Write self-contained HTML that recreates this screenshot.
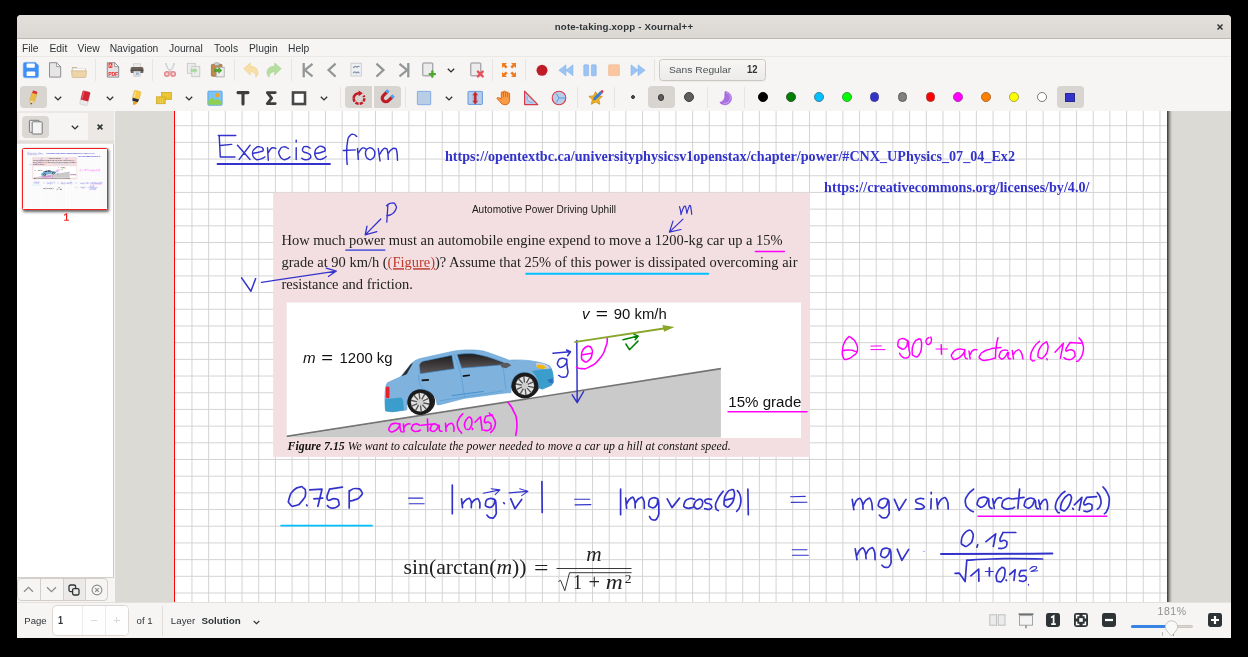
<!DOCTYPE html>
<html>
<head>
<meta charset="utf-8">
<title>note-taking.xopp - Xournal++</title>
<style>
*{box-sizing:border-box;margin:0;padding:0}
html,body{width:1248px;height:657px;overflow:hidden;background:#000;font-family:"Liberation Sans",sans-serif;}
#win{will-change:transform;position:absolute;left:17px;top:15px;width:1214px;height:623px;background:#f6f5f4;border-radius:4px 4px 0 0;overflow:hidden}
.abs{position:absolute}
#title{position:absolute;left:0;top:0;width:1214px;height:24px;background:linear-gradient(#e3e0dc,#dbd7d3);border-bottom:1px solid #bfb8b1;border-radius:4px 4px 0 0}
#title .t{position:absolute;left:0;width:1214px;top:6.4px;text-align:center;font-weight:bold;font-size:9.7px;color:#2e3436;letter-spacing:.16px}
#title .x{position:absolute;left:1196px;top:3px;font-size:13px;font-weight:bold;color:#2e3436}
#menu{position:absolute;left:0;top:24px;width:1214px;height:18px;font-size:10.3px;color:#2e3436}
#menu span{position:absolute;top:3.5px}
.sep{position:absolute;width:1px;background:#e7e4e1}
.ic{position:absolute;width:16px;height:16px;overflow:visible}
.btnbg{position:absolute;background:#d8d4d0;border-radius:4px}
.dd{position:absolute;width:8px;height:5px}
#sidebar{position:absolute;left:0;top:96px;width:97px;height:491px;background:#fff;border-right:1px solid #cdc7c2}
#canvas{position:absolute;left:98px;top:96px;width:1116px;height:491px;background:#dcdad5;overflow:hidden}
#page{position:absolute;left:60.0px;top:-2.2px;width:992px;height:701px;background:#fff;outline:1.4px solid #f00}
#status{position:absolute;left:0;top:587px;width:1214px;height:36px;background:#f6f5f4;font-size:10px;color:#2e3436}
</style>
</head>
<body>
<div id="win">
  <div id="title"><div class="t">note-taking.xopp - Xournal++</div><svg class="abs" style="left:1199.600px;top:8.700px;width:6px;height:6px" viewBox="0 0 6 6"><path d="M.5.500l5 5M5.500.500l-5 5" stroke="#2e3436" stroke-width="1.450"/></svg></div>
  <div class="abs" style="left:0;top:40.700px;width:1214px;height:1px;background:#ebe9e6"></div>
  <div id="menu">
    <span style="left:5px">File</span><span style="left:32.500px">Edit</span><span style="left:60.500px">View</span><span style="left:92.700px">Navigation</span><span style="left:152px">Journal</span><span style="left:197px">Tools</span><span style="left:232px">Plugin</span><span style="left:271px">Help</span>
  </div>
  <!-- toolbar 1 -->
  <div class="sep" style="left:78px;top:44px;height:22px"></div>
  <div class="sep" style="left:135px;top:44px;height:22px"></div>
  <div class="sep" style="left:217px;top:44px;height:22px"></div>
  <div class="sep" style="left:274px;top:44px;height:22px"></div>
  <div class="sep" style="left:475px;top:44px;height:22px"></div>
  <div class="sep" style="left:508px;top:44px;height:22px"></div>
  <div class="sep" style="left:637px;top:44px;height:22px"></div>
  <!-- save -->
  <svg class="ic" style="left:6.3px;top:47px" viewBox="0 0 16 16"><path d="M2.2 0.3h10.2l3.2 3v10.5a2 2 0 0 1-2 2H2.2a2 2 0 0 1-2-2V2.3a2 2 0 0 1 2-2z" fill="#3f8ff5"/><path d="M2.2 0.3h10.2l3.2 3v10.5a2 2 0 0 1-2 2H2.2a2 2 0 0 1-2-2V2.3a2 2 0 0 1 2-2z" fill="none" stroke="#73aef8" stroke-width=".6"/><rect x="3.6" y="1.6" width="8.2" height="4.2" rx=".8" fill="#fff"/><rect x="3.6" y="9.6" width="8.6" height="4.4" rx=".8" fill="#fff"/></svg>
  <!-- new -->
  <svg class="ic" style="left:30.3px;top:47px" viewBox="0 0 16 16"><path d="M2.5 0.7h7.2l4 4v10.4H2.5z" fill="#e6e6e6" stroke="#8e8e93" stroke-width="1" stroke-linejoin="round"/><path d="M9.7 0.7v4h4z" fill="#fafafa" stroke="#8e8e93" stroke-width=".9" stroke-linejoin="round"/></svg>
  <!-- open -->
  <svg class="ic" style="left:54.300px;top:47px" viewBox="0 0 16 16"><path d="M0.800 6a1 1 0 0 1 1-1h3.600l1.200 1H14a1 1 0 0 1 1 1v3H0.800z" fill="#cbb89c"/><rect x="1.800" y="6.300" width="12.600" height="3.400" fill="#fff" stroke="#d8d8d8" stroke-width=".4"/><path d="M0.500 8.800h15l-.6 6a.8.800 0 0 1-.8.700H1.900a.8.800 0 0 1-.8-.7z" fill="#eed5a8" stroke="#cfb386" stroke-width=".7"/></svg>
  <!-- pdf -->
  <svg class="ic" style="left:87.5px;top:47px" viewBox="0 0 16 16"><path d="M2.3 0.7h7.4l4 4v10.4H2.3z" fill="#e2e2e4" stroke="#8e8e93" stroke-width="1" stroke-linejoin="round"/><path d="M9.7 0.7v4h4z" fill="#fafafa" stroke="#8e8e93" stroke-width=".9" stroke-linejoin="round"/><rect x="3.5" y="1.2" width="3.8" height="4.6" fill="#ef2929"/><path d="M4.3 4.8l1-2.6 1.2 2.6" stroke="#fff" stroke-width=".7" fill="none"/><text x="3.3" y="13.6" font-family="Liberation Sans" font-weight="bold" font-size="5.2" fill="#ef2929" letter-spacing="-.2">PDF</text></svg>
  <!-- print -->
  <svg class="ic" style="left:111.500px;top:47px" viewBox="0 0 16 16"><rect x="4.600" y="1.800" width="6.800" height="3.800" fill="#ececec" stroke="#c4c4c4" stroke-width=".6"/><path d="M1.600 6.600a1.500 1.500 0 0 1 1.500-1.500h9.800a1.500 1.500 0 0 1 1.500 1.500v3.600a.8.800 0 0 1-.8.800H2.400a.8.800 0 0 1-.8-.8z" fill="#6d6058"/><rect x="1.600" y="7.800" width="12.800" height="1" fill="#4b423d"/><rect x="4.800" y="9.200" width="6.400" height="5" fill="#dfe3e8" stroke="#b9bec5" stroke-width=".6"/><rect x="7" y="10.400" width="2.800" height="2.400" fill="#9eb1c9"/></svg>
  <!-- cut -->
  <svg class="ic" style="left:144.500px;top:47px" viewBox="0 0 16 16"><path d="M3.900 1.800c.6 2.800 2.400 5.700 5.200 8.300M12.100 1.800c-.6 2.800-2.400 5.700-5.200 8.300" stroke="#c6c6ca" stroke-width="1.500" fill="none" stroke-linecap="round"/><path d="M4.400 2.600c.6 2.200 1.800 4.200 3.600 6M11.600 2.600c-.6 2.200-1.800 4.200-3.600 6" stroke="#ededee" stroke-width=".6" fill="none"/><circle cx="4.900" cy="12" r="2.200" fill="#f2cfd1" stroke="#e3898e" stroke-width="1.500"/><circle cx="11.100" cy="12" r="2.200" fill="#f2cfd1" stroke="#e3898e" stroke-width="1.500"/></svg>
  <!-- copy -->
  <svg class="ic" style="left:168.600px;top:47px" viewBox="0 0 16 16"><rect x="1.300" y="1.300" width="8" height="10" fill="#ececec" stroke="#c3c3c6" stroke-width=".8"/><rect x="5.800" y="4.300" width="8" height="10.400" fill="#ececec" stroke="#c3c3c6" stroke-width=".8"/><path d="M11.600 8.500L8.400 5.700v1.600H4.600v2.400h3.800v1.600z" fill="#a5d89b"/></svg>
  <!-- paste -->
  <svg class="ic" style="left:192.500px;top:47px" viewBox="0 0 16 16"><rect x="1.400" y="2.300" width="10.600" height="12" rx="1" fill="#c08a4a" stroke="#8c6a3f" stroke-width=".7"/><rect x="4.500" y="0.800" width="4.600" height="2.600" rx=".8" fill="#d5d5d5" stroke="#8e8e8e" stroke-width=".6"/><rect x="6.200" y="5.300" width="8" height="9.600" fill="#ededed" stroke="#a9a9ad" stroke-width=".8"/><path d="M11.800 8.400L8.700 5.600v1.700H4.600v2.300h4.100v1.700z" fill="#4fae2f" stroke="#2f8a1a" stroke-width=".5"/></svg>
  <!-- undo -->
  <svg class="ic" style="left:225.800px;top:47px" viewBox="0 0 16 16"><path d="M0.800 6.600L7.300 1v3.200c4.500 0 7.700 2.600 7.700 6.400 0 2-1 3.700-2.300 4.600.5-3.400-1.600-5.400-5.400-5.400v3.300z" fill="#f6dfa6" stroke="#f0cf86" stroke-width=".6" stroke-linejoin="round"/></svg>
  <!-- redo -->
  <svg class="ic" style="left:249.400px;top:47px" viewBox="0 0 16 16"><path d="M15.200 6.600L8.700 1v3.200C4.200 4.200 1 6.800 1 10.600c0 2 1 3.700 2.300 4.600-.5-3.400 1.600-5.400 5.400-5.400v3.300z" fill="#b7dea1" stroke="#a3d488" stroke-width=".6" stroke-linejoin="round"/></svg>
  <!-- first -->
  <svg class="ic" style="left:283px;top:47px" viewBox="0 0 16 16"><path d="M3.700 1v14.300" stroke="#939696" stroke-width="2.300" fill="none"/><path d="M12.500 1.800L4.800 8.100l7.700 6.300" stroke="#939696" stroke-width="2.150" fill="none"/></svg>
  <!-- prev -->
  <svg class="ic" style="left:307px;top:47px" viewBox="0 0 16 16"><path d="M11.600 1.600L4.500 8.100l7.100 6.500" stroke="#939696" stroke-width="2.150" fill="none"/></svg>
  <!-- pageicon -->
  <svg class="ic" style="left:330.700px;top:47px" viewBox="0 0 16 16"><rect x="3" y="1.200" width="10.300" height="12.800" fill="#eef0f2" stroke="#c2c5c8" stroke-width=".8"/><path d="M5 5.600c1-.2 1.500-1.300 2.400-1.300s1 1 2 .6 1.400-.7 2-.3M5 11c.8-.2 1-1.300 1.800-1.200s.8 1.200 1.700 1 1-1 1.600-.7 1 .8 1.400.8" stroke="#7f93ab" stroke-width="1.300" fill="none"/></svg>
  <!-- next -->
  <svg class="ic" style="left:354.900px;top:47px" viewBox="0 0 16 16"><path d="M4.400 1.600l7.100 6.500-7.100 6.500" stroke="#939696" stroke-width="2.150" fill="none"/></svg>
  <!-- last -->
  <svg class="ic" style="left:378.750px;top:47px" viewBox="0 0 16 16"><path d="M12.300 1v14.300" stroke="#939696" stroke-width="2.300" fill="none"/><path d="M3.500 1.800l7.700 6.300-7.700 6.300" stroke="#939696" stroke-width="2.150" fill="none"/></svg>
  <!-- addpage -->
  <svg class="ic" style="left:404px;top:47px" viewBox="0 0 16 16"><rect x="1.800" y="1" width="10" height="12.800" rx=".6" fill="#ececec" stroke="#8e8e93" stroke-width="1"/><path d="M11.300 9.400v5.400M8.600 12.100h5.400" stroke="#4aa82c" stroke-width="2.300" stroke-linecap="round"/></svg>
  <!-- dd -->
  <svg class="dd" style="left:430.400px;top:53px" viewBox="0 0 8 5"><path d="M.8.800L4 3.900 7.200.8" stroke="#2e3436" stroke-width="1.400" fill="none"/></svg>
  <!-- delpage -->
  <svg class="ic" style="left:451.600px;top:47px" viewBox="0 0 16 16"><rect x="1.800" y="1" width="10" height="12.800" rx=".6" fill="#ececec" stroke="#8e8e93" stroke-width="1"/><path d="M8.900 9.600l4.800 4.800M13.700 9.600l-4.800 4.800" stroke="#e8505b" stroke-width="2.400" stroke-linecap="round"/></svg>
  <!-- fullscreen -->
  <svg class="ic" style="left:483.600px;top:47px" viewBox="0 0 16 16"><g fill="#f07c22"><path d="M1 1h5L4.400 2.600l2.200 2.200-1.800 1.800-2.200-2.200L1 6z"/><path d="M15 1v5l-1.600-1.600-2.200 2.200-1.800-1.800 2.200-2.200L10 1z"/><path d="M1 15v-5l1.600 1.600 2.200-2.200 1.800 1.800-2.200 2.200L6 15z"/><path d="M15 15h-5l1.600-1.600-2.200-2.200 1.800-1.800 2.200 2.200L15 10z"/></g></svg>
  <!-- record -->
  <svg class="ic" style="left:516.600px;top:47px" viewBox="0 0 16 16"><circle cx="8" cy="8.300" r="5.500" fill="#c01c28"/></svg>
  <!-- rewind -->
  <svg class="ic" style="left:541px;top:47px" viewBox="0 0 16 16"><path d="M8 2.800v11L.8 8.300zM15 2.800v11L7.800 8.300z" fill="#9cc3f3" stroke="#7fb0ee" stroke-width=".5"/></svg>
  <!-- pause -->
  <svg class="ic" style="left:564.500px;top:47px" viewBox="0 0 16 16"><rect x="1.800" y="2.800" width="4.800" height="11" rx=".6" fill="#9cc3f3" stroke="#7fb0ee" stroke-width=".6"/><rect x="9.400" y="2.800" width="4.800" height="11" rx=".6" fill="#9cc3f3" stroke="#7fb0ee" stroke-width=".6"/></svg>
  <!-- stop -->
  <svg class="ic" style="left:588.600px;top:47px" viewBox="0 0 16 16"><rect x="2.600" y="2.800" width="10.800" height="10.800" rx=".6" fill="#f9c6a1" stroke="#f3b286" stroke-width=".6"/></svg>
  <!-- fwd -->
  <svg class="ic" style="left:612.500px;top:47px" viewBox="0 0 16 16"><path d="M1 2.800v11l7.200-5.500zM8 2.800v11l7.200-5.500z" fill="#9cc3f3" stroke="#7fb0ee" stroke-width=".5"/></svg>
  <!-- font button -->
  <div class="abs" style="left:641.600px;top:44.300px;width:107px;height:21.400px;border:1px solid #cdc7c2;border-radius:3.500px;background:linear-gradient(#f7f6f5,#edebe9);box-shadow:0 1px 0 rgba(0,0,0,.04)"></div>
  <div class="abs" id="fontname" style="left:651.700px;top:50.200px;font-size:9.200px;color:#4b5153;transform-origin:0 50%;transform:scaleX(1.118);white-space:nowrap">Sans Regular</div>
  <div class="abs" id="fontsize" style="left:730.200px;top:48.700px;font-size:10px;font-weight:bold;color:#2e3436;transform-origin:0 50%;transform:scaleX(.94);white-space:nowrap">12</div>
  <!--TOOLBAR1-->
  <!-- toolbar 2 -->
  <div class="btnbg" style="left:2.500px;top:71px;width:27.300px;height:22.300px"></div>
  <div class="btnbg" style="left:328.400px;top:71px;width:27.100px;height:22.300px;border-radius:4px 0 0 4px"></div>
  <div class="btnbg" style="left:356.500px;top:71px;width:27.100px;height:22.300px;border-radius:0 4px 4px 0"></div>
  <div class="btnbg" style="left:630.500px;top:71px;width:27.200px;height:22.300px"></div>
  <div class="btnbg" style="left:1039.500px;top:71px;width:27.200px;height:22.300px"></div>
  <div class="sep" style="left:323px;top:72px;height:21px"></div>
  <div class="sep" style="left:388px;top:72px;height:21px"></div>
  <div class="sep" style="left:560px;top:72px;height:21px"></div>
  <div class="sep" style="left:597px;top:72px;height:21px"></div>
  <div class="sep" style="left:690px;top:72px;height:21px"></div>
  <div class="sep" style="left:727px;top:72px;height:21px"></div>
  <!-- pencil -->
  <svg class="ic" style="left:8px;top:74.600px" viewBox="0 0 16 16"><g transform="rotate(18 8 8)"><path d="M5.600 2.600h4.800v8.200L8 14.900l-2.400-4.100z" fill="#f5c24a" stroke="#c99a2a" stroke-width=".5"/><path d="M5.600 1.600a1 1 0 0 1 1-1h2.800a1 1 0 0 1 1 1v1.800H5.600z" fill="#d9333f"/><path d="M5.600 10.800L8 14.900l2.400-4.100z" fill="#e8d3b0"/><path d="M7.100 13.300L8 14.900l.9-1.600z" fill="#333"/><path d="M7.300 3.400v7.400M8.900 3.400v7.400" stroke="#dca83a" stroke-width=".5"/></g></svg>
  <svg class="dd" style="left:37.400px;top:80.500px" viewBox="0 0 8 5"><path d="M.8.800L4 3.900 7.200.8" stroke="#2e3436" stroke-width="1.400" fill="none"/></svg>
  <!-- eraser -->
  <svg class="ic" style="left:59.500px;top:74.600px" viewBox="0 0 16 16"><g transform="rotate(14 8 8)"><rect x="4.100" y="1.200" width="7.800" height="13.800" rx="1.200" fill="#e9e9ea" stroke="#c4c4c6" stroke-width=".5"/><path d="M4.100 2.400a1.200 1.200 0 0 1 1.200-1.200h5.400a1.200 1.200 0 0 1 1.200 1.200v8.200H4.100z" fill="#d32433"/><path d="M5.400 1.600v8.600" stroke="#e86470" stroke-width=".9"/></g></svg>
  <svg class="dd" style="left:88.700px;top:80.500px" viewBox="0 0 8 5"><path d="M.8.800L4 3.900 7.200.8" stroke="#2e3436" stroke-width="1.400" fill="none"/></svg>
  <!-- highlighter -->
  <svg class="ic" style="left:110.750px;top:74.600px" viewBox="0 0 16 16"><g transform="rotate(14 8 8)"><rect x="4.600" y="0.800" width="6.800" height="8.200" rx="1" fill="#f7c948" stroke="#e0a92a" stroke-width=".5"/><path d="M6 2v6" stroke="#fbe08c" stroke-width="1.200"/><path d="M4.600 8.600h6.800l-.7 3.200H5.300z" fill="#2b2f3a"/><path d="M5.800 11.800h4.400l-.4 2.200-3 1.400z" fill="#f0a020"/></g></svg>
  <!-- measure -->
  <svg class="ic" style="left:138.750px;top:74.600px" viewBox="0 0 16 16"><rect x="5.600" y="2.400" width="10" height="7.200" fill="#e8c02c" stroke="#c79f1a" stroke-width=".6"/><rect x="0.400" y="6.800" width="8.800" height="7" fill="#e8c02c" stroke="#c79f1a" stroke-width=".6"/><path d="M7 4h7.400M7 6h7.400M2 9h5.600M2 11h5.600M2 12.600h5.600" stroke="#f6dc72" stroke-width=".8" stroke-dasharray="1.200 .8"/></svg>
  <svg class="dd" style="left:168px;top:80.500px" viewBox="0 0 8 5"><path d="M.8.800L4 3.900 7.200.8" stroke="#2e3436" stroke-width="1.400" fill="none"/></svg>
  <!-- image -->
  <svg class="ic" style="left:189.900px;top:74.600px" viewBox="0 0 16 16"><rect x="0.900" y="1.200" width="14.200" height="14" rx=".8" fill="#7cc4f5" stroke="#4a97e8" stroke-width=".8"/><circle cx="10.200" cy="5.200" r="2.100" fill="#f5a623"/><path d="M1.300 11l3.400-3.800 3.500 3.300 2.400-1.800 4.100 3.300v2.800H1.300z" fill="#8fd14f"/></svg>
  <!-- T -->
  <svg class="ic" style="left:217.800px;top:74.600px" viewBox="0 0 16 16"><path d="M3 2.600h10M8 2.600v11.400" stroke="#3d3d3d" stroke-width="3.100" stroke-linecap="round" fill="none"/></svg>
  <!-- sigma -->
  <svg class="ic" style="left:245.600px;top:74.600px" viewBox="0 0 16 16"><path d="M12.200 2.600H4.400l4.200 5.500L4.400 13.600h7.800" stroke="#3d3d3d" stroke-width="2.900" stroke-linecap="round" stroke-linejoin="round" fill="none"/></svg>
  <!-- rect -->
  <svg class="ic" style="left:273.750px;top:74.600px" viewBox="0 0 16 16"><rect x="2" y="2.500" width="12" height="11.500" fill="#fff" stroke="#474747" stroke-width="2.600"/></svg>
  <svg class="dd" style="left:303px;top:80.500px" viewBox="0 0 8 5"><path d="M.8.800L4 3.900 7.200.8" stroke="#2e3436" stroke-width="1.400" fill="none"/></svg>
  <!-- rotation snapping -->
  <svg class="ic" style="left:334.250px;top:74.800px" viewBox="0 0 16 16"><path d="M8.600 3.200A5.300 5.300 0 0 0 2.700 8.500" stroke="#c01c28" stroke-width="2.500" fill="none"/><path d="M7.600 0.400l4.200 2.900-4.200 2.900z" fill="#c01c28"/><path d="M2.700 8.500a5.300 5.300 0 0 0 10.600 0 5.300 5.300 0 0 0-.8-2.800" stroke="#c01c28" stroke-width="2.500" fill="none" stroke-dasharray="3.300 1.100"/></svg>
  <!-- magnet -->
  <svg class="ic" style="left:361px;top:75.300px" viewBox="0 0 16 16"><g transform="rotate(45 8 8) translate(8 8) scale(.92) translate(-8 -8)"><path d="M2.300 1.800v6.400a5.700 5.700 0 0 0 11.400 0V1.800h-3.500v6.400a2.200 2.200 0 0 1-4.400 0V1.800z" fill="#c01c28"/><rect x="2.300" y="0.200" width="3.500" height="3.300" fill="#4aa3f5"/><rect x="10.200" y="0.200" width="3.500" height="3.300" fill="#4aa3f5"/></g></svg>
  <!-- blue square -->
  <svg class="ic" style="left:399px;top:74.600px" viewBox="0 0 16 16"><rect x="1.400" y="1.400" width="13.300" height="13.300" rx=".6" fill="#b9cde6" stroke="#79a7e3" stroke-width=".9"/></svg>
  <svg class="dd" style="left:428.400px;top:80.500px" viewBox="0 0 8 5"><path d="M.8.800L4 3.900 7.200.8" stroke="#2e3436" stroke-width="1.400" fill="none"/></svg>
  <!-- vspace -->
  <svg class="ic" style="left:450.400px;top:74.600px" viewBox="0 0 16 16"><rect x="1" y="1.400" width="14.400" height="13" rx=".6" fill="#b9cde6" stroke="#5a92dd" stroke-width=".9"/><path d="M5.400 1.600v12.600M11.100 1.600v12.600" stroke="#a3bfe6" stroke-width=".7"/><path d="M8.200 1.800l2.300 3.300H9.300v5.800h1.200L8.200 14.200 5.900 10.900h1.200V5.100H5.900z" fill="#cf222e" stroke="#b01923" stroke-width=".4"/></svg>
  <!-- hand -->
  <svg class="ic" style="left:479.200px;top:74.600px" viewBox="0 0 16 16"><path d="M5.300 8.600V2.900a1.050 1.050 0 0 1 2.100 0V2.200a1.050 1.050 0 0 1 2.100 0v.7a1.050 1.050 0 0 1 2.100 0v1a1 1 0 0 1 2 0v6.300c0 2.800-1.700 4.500-4.500 4.500-2.600 0-3.800-1-5.100-3L1.200 8.800c-.5-.9.700-1.700 1.500-1z" fill="#fb9b45" stroke="#d9600f" stroke-width=".9" stroke-linejoin="round"/><path d="M7.400 3v4.200M9.500 3v4.200M11.600 4v3.400" stroke="#d9600f" stroke-width=".8" fill="none"/></svg>
  <!-- setsquare -->
  <svg class="ic" style="left:506px;top:74.600px" viewBox="0 0 16 16"><path d="M1.600 1.200L14.800 14.600H1.600z" fill="#b9cde6" stroke="#d93a4a" stroke-width="1.200" stroke-linejoin="round"/><path d="M4 6.300a5.500 5.500 0 0 0 5.500 6.200" fill="#dfe3e6" stroke="#6aa5ea" stroke-width="1"/></svg>
  <!-- compass -->
  <svg class="ic" style="left:534px;top:74.600px" viewBox="0 0 16 16"><circle cx="8" cy="8" r="6.800" fill="#b9cde6" stroke="#d93a4a" stroke-width="1.100"/><path d="M8 8h6.600M8 8L5.400 3.600M8 8l-2.600 4.500" stroke="#4a97e8" stroke-width=".9"/></svg>
  <!-- star pen -->
  <svg class="ic" style="left:571px;top:74.600px" viewBox="0 0 16 16"><path d="M7.600 1.600l2 4.300 4.700.5-3.500 3.200 1 4.700-4.200-2.400-4.200 2.400 1-4.700L.9 6.400l4.700-.5z" fill="#f1b425" stroke="#c98a12" stroke-width=".8" stroke-linejoin="round"/><path d="M12.300 1.300l1.900 1.900-6.300 6.300-2.500.7.600-2.600z" fill="#3b7fd9" stroke="#2a5fa8" stroke-width=".4"/><path d="M12.300 1.300l1.900 1.900 .9-.9a1.300 1.300 0 0 0-1.900-1.900z" fill="#d9333f"/></svg>
  <!-- dots -->
  <div class="abs" style="left:613.700px;top:79.900px;width:4.600px;height:4.600px;border-radius:50%;background:#4a4a4a;border:.8px solid #333"></div>
  <div class="abs" style="left:640.700px;top:78.900px;width:6.800px;height:6.800px;border-radius:50%;background:#5c5c5c;border:.8px solid #3c3c3c"></div>
  <div class="abs" style="left:667px;top:77.200px;width:10px;height:10px;border-radius:50%;background:#5e5e5e;border:.8px solid #3f3f3f"></div>
  <!-- fill -->
  <svg class="ic" style="left:701.400px;top:74.600px" viewBox="0 0 16 16"><path d="M7 1.600a6.600 6.600 0 1 1-5.200 10.800c2.800-.6 4.700-2.700 5-5.600.1-1.800.1-3.400.2-5.200z" fill="#a96fe0" stroke="#9b59dc" stroke-width=".6"/><path d="M8.200 2.600a5.400 5.400 0 0 1-2.600 10.600" fill="none" stroke="#d9bdf3" stroke-width=".7"/></svg>
  <div class="abs" style="left:741.10px;top:77.400px;width:9.800px;height:9.800px;border-radius:50%;background:#000000;border:.8px solid #000"></div>
  <div class="abs" style="left:769.00px;top:77.400px;width:9.800px;height:9.800px;border-radius:50%;background:#008000;border:.8px solid #2a5a2a"></div>
  <div class="abs" style="left:796.90px;top:77.400px;width:9.800px;height:9.800px;border-radius:50%;background:#00c0ff;border:.8px solid #3a7f9c"></div>
  <div class="abs" style="left:824.80px;top:77.400px;width:9.800px;height:9.800px;border-radius:50%;background:#00ff00;border:.8px solid #3a9a3a"></div>
  <div class="abs" style="left:852.70px;top:77.400px;width:9.800px;height:9.800px;border-radius:50%;background:#3333cc;border:.8px solid #3a3a8a"></div>
  <div class="abs" style="left:880.60px;top:77.400px;width:9.800px;height:9.800px;border-radius:50%;background:#808080;border:.8px solid #5a5a5a"></div>
  <div class="abs" style="left:908.50px;top:77.400px;width:9.800px;height:9.800px;border-radius:50%;background:#ff0000;border:.8px solid #a33"></div>
  <div class="abs" style="left:936.40px;top:77.400px;width:9.800px;height:9.800px;border-radius:50%;background:#ff00ff;border:.8px solid #a3a"></div>
  <div class="abs" style="left:964.30px;top:77.400px;width:9.800px;height:9.800px;border-radius:50%;background:#ff8000;border:.8px solid #a63"></div>
  <div class="abs" style="left:992.20px;top:77.400px;width:9.800px;height:9.800px;border-radius:50%;background:#ffff00;border:.8px solid #aa3"></div>
  <div class="abs" style="left:1020.10px;top:77.400px;width:9.800px;height:9.800px;border-radius:50%;background:#ffffff;border:.8px solid #777"></div>
  <div class="abs" style="left:1048.200px;top:77.600px;width:9.800px;height:9.600px;background:#3333cc;border:.8px solid #2a2a8a"></div>
  <!--TOOLBAR2-->
  <div id="sidebar">
    <div class="abs" style="left:0;top:0;width:97px;height:32.500px;background:linear-gradient(#ebe8e5 0,#ebe8e5 29px,#dedad6 31px,#e6e3e0 32.500px)"></div>
    <div class="abs" style="left:2.400px;top:2.200px;width:68.500px;height:27px;background:#f6f5f4"></div>
    <div class="btnbg" style="left:5px;top:4.500px;width:27.200px;height:22px;background:#dbd7d3"></div>
    <svg class="ic" style="left:10.600px;top:7.500px" viewBox="0 0 16 16"><rect x="1.400" y="1.300" width="9.800" height="12" rx=".8" fill="#e9e9e9" stroke="#77797b" stroke-width="1"/><rect x="4.200" y="2.800" width="10" height="12.200" rx=".8" fill="#f4f4f4" stroke="#77797b" stroke-width="1"/></svg>
    <svg class="dd" style="left:54.200px;top:13.800px" viewBox="0 0 8 5"><path d="M.8.800L4 3.900 7.200.8" stroke="#2e3436" stroke-width="1.400" fill="none"/></svg>
    <svg class="abs" style="left:79.800px;top:12.800px;width:6px;height:6px" viewBox="0 0 6 6"><path d="M.6.600l4.800 4.800M5.400.600L.600 5.400" stroke="#2e3436" stroke-width="1.650"/></svg>
    <!-- thumbnail -->
    <div class="abs" style="left:5.300px;top:37px;width:86.200px;height:62px;background:#fff;border:1.700px solid #f02020;border-radius:1.500px;box-shadow:1px 1.500px 3px rgba(0,0,0,.6)"></div>
    <svg class="abs" style="left:7px;top:38.600px;width:83px;height:59px" viewBox="0 0 992 701" preserveAspectRatio="none"><use href="#pg"/></svg>
    <svg class="abs" style="left:45.600px;top:101.900px;width:7px;height:8px" viewBox="0 0 7 8"><path d="M1 2.200L3.600 .800V7.200M1.200 7.200H6" stroke="#f01c1c" stroke-width="1.150" fill="none"/></svg>
    <!-- bottom buttons -->
    <div class="abs" style="left:0;top:465.500px;width:97px;height:25px;background:#f6f5f4;border-top:1px solid #d5d0cc"></div>
    <div class="abs" style="left:0.300px;top:467.200px;width:91.200px;height:22.500px;border:1px solid #d3cec9;border-radius:4px;background:#f6f5f4;overflow:hidden">
      <div class="abs" style="left:44.300px;top:0;width:23px;height:22px;background:#eceae8;border-left:1px solid #d3cec9;border-right:1px solid #d3cec9"></div>
      <div class="abs" style="left:21.600px;top:0;width:1px;height:22px;background:#d3cec9"></div>
    </div>
    <svg class="abs" style="left:6.300px;top:475px;width:11px;height:7px" viewBox="0 0 11 7"><path d="M1 5.800L5.500 1.400 10 5.800" stroke="#8b8e8f" stroke-width="1.300" fill="none"/></svg>
    <svg class="abs" style="left:28.800px;top:475.400px;width:11px;height:7px" viewBox="0 0 11 7"><path d="M1 1.200l4.500 4.400L10 1.200" stroke="#8b8e8f" stroke-width="1.300" fill="none"/></svg>
    <svg class="abs" style="left:51px;top:472.800px;width:12px;height:12px" viewBox="0 0 12 12"><rect x="1" y="1" width="6.600" height="6.600" rx="1.600" fill="none" stroke="#2e3436" stroke-width="1.300"/><rect x="4.600" y="4.600" width="6.400" height="6.400" rx="1.400" fill="#eceae8" stroke="#2e3436" stroke-width="1.300"/></svg>
    <svg class="abs" style="left:73.800px;top:473px;width:12px;height:12px" viewBox="0 0 12 12"><circle cx="6" cy="6" r="4.900" fill="none" stroke="#8b8e8f" stroke-width="1.100"/><path d="M4.200 4.200l3.600 3.600M7.800 4.200L4.200 7.800" stroke="#8b8e8f" stroke-width="1.200"/></svg>
  <!--SIDEBAR-->
  </div>
  <div id="canvas">
    <div class="abs" style="left:1053.300px;top:0;width:4.600px;height:491px;background:linear-gradient(to right,rgba(70,74,72,.9),rgba(110,110,105,.5) 35%,rgba(160,160,155,.15) 75%,rgba(220,218,213,0))"></div>
    <div id="page">
<!--PAGE_BEGIN-->
<svg id="pagesvg" class="abs" style="left:0;top:0;width:992.0px;height:701.0px" viewBox="0 0 992.0 701.0">
<g id="pg" transform="translate(-175.0,-108.8)">
<path d="M191.94 108.8V809.8M208.63 108.8V809.8M225.32 108.8V809.8M242.01 108.8V809.8M258.70 108.8V809.8M275.39 108.8V809.8M292.08 108.8V809.8M308.77 108.8V809.8M325.46 108.8V809.8M342.15 108.8V809.8M358.84 108.8V809.8M375.53 108.8V809.8M392.22 108.8V809.8M408.91 108.8V809.8M425.60 108.8V809.8M442.29 108.8V809.8M458.98 108.8V809.8M475.67 108.8V809.8M492.36 108.8V809.8M509.05 108.8V809.8M525.74 108.8V809.8M542.43 108.8V809.8M559.12 108.8V809.8M575.81 108.8V809.8M592.50 108.8V809.8M609.19 108.8V809.8M625.88 108.8V809.8M642.57 108.8V809.8M659.26 108.8V809.8M675.95 108.8V809.8M692.64 108.8V809.8M709.33 108.8V809.8M726.02 108.8V809.8M742.71 108.8V809.8M759.40 108.8V809.8M776.09 108.8V809.8M792.78 108.8V809.8M809.47 108.8V809.8M826.16 108.8V809.8M842.85 108.8V809.8M859.54 108.8V809.8M876.23 108.8V809.8M892.92 108.8V809.8M909.61 108.8V809.8M926.30 108.8V809.8M942.99 108.8V809.8M959.68 108.8V809.8M976.37 108.8V809.8M993.06 108.8V809.8M1009.75 108.8V809.8M1026.44 108.8V809.8M1043.13 108.8V809.8M1059.82 108.8V809.8M1076.51 108.8V809.8M1093.20 108.8V809.8M1109.89 108.8V809.8M1126.58 108.8V809.8M1143.27 108.8V809.8M1159.96 108.8V809.8M175.0 125.49H1167.0M175.0 142.18H1167.0M175.0 158.87H1167.0M175.0 175.56H1167.0M175.0 192.25H1167.0M175.0 208.94H1167.0M175.0 225.63H1167.0M175.0 242.32H1167.0M175.0 259.01H1167.0M175.0 275.70H1167.0M175.0 292.39H1167.0M175.0 309.08H1167.0M175.0 325.77H1167.0M175.0 342.46H1167.0M175.0 359.15H1167.0M175.0 375.84H1167.0M175.0 392.53H1167.0M175.0 409.22H1167.0M175.0 425.91H1167.0M175.0 442.60H1167.0M175.0 459.29H1167.0M175.0 475.98H1167.0M175.0 492.67H1167.0M175.0 509.36H1167.0M175.0 526.05H1167.0M175.0 542.74H1167.0M175.0 559.43H1167.0M175.0 576.12H1167.0M175.0 592.81H1167.0M175.0 609.50H1167.0M175.0 626.19H1167.0M175.0 642.88H1167.0M175.0 659.57H1167.0M175.0 676.26H1167.0M175.0 692.95H1167.0M175.0 709.64H1167.0M175.0 726.33H1167.0M175.0 743.02H1167.0M175.0 759.71H1167.0M175.0 776.40H1167.0M175.0 793.09H1167.0" stroke="#cfcfcf" stroke-width="0.9" fill="none"/>
<!-- typed URL text -->
<text x="444.900" y="160.400" font-family="Liberation Serif" font-weight="bold" font-size="14.120" fill="#3333cc" textLength="570.100" lengthAdjust="spacingAndGlyphs">https://opentextbc.ca/universityphysicsv1openstax/chapter/power/#CNX_UPhysics_07_04_Ex2</text>
<text x="824.100" y="191.400" font-family="Liberation Serif" font-weight="bold" font-size="14.120" fill="#3333cc" textLength="265.300" lengthAdjust="spacingAndGlyphs">https://creativecommons.org/licenses/by/4.0/</text>
<!-- pink box -->
<rect x="273.100" y="192.500" width="536.800" height="264.200" fill="#f3dfe1"/>
<text x="471.900" y="212.600" font-family="Liberation Sans" font-size="10.080" fill="#1a1a1a" textLength="144" lengthAdjust="spacingAndGlyphs">Automotive Power Driving Uphill</text>
<g font-family="Liberation Serif" font-size="14.470" fill="#222">
<text x="281.500" y="244.950">How much power must an automobile engine expend to move a 1200-kg car up a 15%</text>
<text x="281.500" y="267.000">grade at 90 km/h (<tspan fill="#c0392b" text-decoration="underline">(Figure)</tspan>)? Assume that 25% of this power is dissipated overcoming air</text>
<text x="281.500" y="289.000">resistance and friction.</text>
</g>
<!-- figure -->
<rect x="286.700" y="302.300" width="514.300" height="135.500" fill="#fff"/>
<path d="M286.700 437.300L720.900 368.400V437.300z" fill="#cacaca"/>
<path d="M286.700 436.200L720.900 368.400" stroke="#747474" stroke-width="1.600" fill="none"/>
<g font-family="Liberation Sans" font-size="15.100" fill="#111">
<text x="303" y="362.700" font-style="italic">m</text>
<text x="321.300" y="362.700" textLength="11.800" lengthAdjust="spacingAndGlyphs">=</text>
<text x="339.600" y="362.700" textLength="52.900" lengthAdjust="spacingAndGlyphs">1200 kg</text>
<text x="582" y="318.600" font-style="italic">v</text>
<text x="595.800" y="318.600" textLength="12.300" lengthAdjust="spacingAndGlyphs">=</text>
<text x="613.800" y="318.600" textLength="52.900" lengthAdjust="spacingAndGlyphs">90 km/h</text>
<text x="728.300" y="406.700" font-size="15.100">15% grade</text>
</g>
<text x="287.600" y="449.600" font-family="Liberation Serif" font-size="11.830" font-style="italic" fill="#111"><tspan font-weight="bold">Figure 7.15</tspan> We want to calculate the power needed to move a car up a hill at constant speed.</text>
<g transform="translate(378,340) scale(0.15064)">
<!-- wheel wells -->
<ellipse cx="286" cy="406" rx="93" ry="86" fill="#222"/>
<ellipse cx="976" cy="296" rx="95" ry="86" fill="#222"/>
<!-- body -->
<path d="M50 470C44 420 44 350 52 305L62 283 150 243 215 163C235 140 255 130 275 123L500 73C560 62 660 62 700 72 760 90 815 112 870 133 930 128 1000 133 1045 142 1090 150 1125 160 1140 172 1158 195 1165 220 1165 280L1150 300 1090 325 1068 318C1072 270 1040 218 975 212 910 212 875 265 883 348L830 352 575 386 410 428 392 428C388 370 350 328 285 326 220 328 185 375 192 462L170 466 95 476z" fill="#7fb2dd" stroke="#5a9fd6" stroke-width="4" stroke-linejoin="round"/>
<!-- bumpers -->
<path d="M48 392L150 380C162 385 166 395 167 405L172 465 95 476 50 470C46 445 45 420 48 392z" fill="#3b9dcb"/>
<path d="M1020 205C1060 195 1110 195 1150 190 1160 210 1165 240 1165 280L1150 300 1090 325 1068 318C1070 280 1055 235 1020 205z" fill="#3b9dcb"/>
<path d="M1125 262L1160 255V286L1138 283z" fill="#2b6fc4"/>
<!-- windows -->
<linearGradient id="wg" x1="0" y1="0" x2="0" y2="1"><stop offset="0" stop-color="#1e1e1e"/><stop offset="1" stop-color="#5b5456"/></linearGradient>
<path d="M156 240L216 162 233 150 190 226z" fill="#2b2b2e"/>
<path d="M280 222L275 165C278 150 290 142 302 139L490 100 506 190z" fill="url(#wg)" stroke="#3d8fd0" stroke-width="4"/>
<path d="M525 95C570 88 610 88 645 91 700 100 790 128 852 156L800 166 555 186z" fill="url(#wg)" stroke="#3d8fd0" stroke-width="4"/>
<path d="M810 156L860 150 885 166 850 186 820 180z" fill="#5a5a5c"/>
<!-- door lines -->
<path d="M505 90L550 222 576 382M832 186L850 332M410 402L832 336M270 230C265 290 290 320 330 335" stroke="#4f9ad8" stroke-width="4" fill="none"/>
<path d="M490 368L700 340" stroke="#3d8fd0" stroke-width="6" fill="none"/>
<path d="M290 267L338 263M563 238L610 233" stroke="#111" stroke-width="11" fill="none"/>
<!-- lights -->
<rect x="52" y="308" width="24" height="78" rx="10" fill="#e8212b"/>
<path d="M1048 152C1080 145 1125 160 1142 186 1110 195 1070 190 1050 175z" fill="#c9ccd0"/>
<ellipse cx="1082" cy="177" rx="30" ry="12" fill="#f2b705" transform="rotate(12 1082 177)"/>
<circle cx="280" cy="412" r="84" fill="#1b1b1b"/>
<circle cx="280" cy="412" r="64" fill="#3a3a3a"/>
<circle cx="280" cy="412" r="61" fill="#e3e3e3"/>
<path d="M303.5 416.8L336.8 423.5" stroke="#555" stroke-width="9" stroke-linecap="round"/>
<path d="M296.2 429.7L319.2 454.7" stroke="#555" stroke-width="9" stroke-linecap="round"/>
<path d="M282.7 435.8L286.6 469.6" stroke="#555" stroke-width="9" stroke-linecap="round"/>
<path d="M268.2 432.9L251.5 462.5" stroke="#555" stroke-width="9" stroke-linecap="round"/>
<path d="M258.2 422.0L227.2 436.1" stroke="#555" stroke-width="9" stroke-linecap="round"/>
<path d="M256.5 407.2L223.2 400.5" stroke="#555" stroke-width="9" stroke-linecap="round"/>
<path d="M263.8 394.3L240.8 369.3" stroke="#555" stroke-width="9" stroke-linecap="round"/>
<path d="M277.3 388.2L273.4 354.4" stroke="#555" stroke-width="9" stroke-linecap="round"/>
<path d="M291.8 391.1L308.5 361.5" stroke="#555" stroke-width="9" stroke-linecap="round"/>
<path d="M301.8 402.0L332.8 387.9" stroke="#555" stroke-width="9" stroke-linecap="round"/>
<circle cx="280" cy="412" r="20" fill="#cfcfcf" stroke="#bbb" stroke-width="2"/>
<circle cx="975" cy="302" r="84" fill="#1b1b1b"/>
<circle cx="975" cy="302" r="64" fill="#3a3a3a"/>
<circle cx="975" cy="302" r="61" fill="#e3e3e3"/>
<path d="M998.5 306.8L1031.8 313.5" stroke="#555" stroke-width="9" stroke-linecap="round"/>
<path d="M991.2 319.7L1014.2 344.7" stroke="#555" stroke-width="9" stroke-linecap="round"/>
<path d="M977.7 325.8L981.6 359.6" stroke="#555" stroke-width="9" stroke-linecap="round"/>
<path d="M963.2 322.9L946.5 352.5" stroke="#555" stroke-width="9" stroke-linecap="round"/>
<path d="M953.2 312.0L922.2 326.1" stroke="#555" stroke-width="9" stroke-linecap="round"/>
<path d="M951.5 297.2L918.2 290.5" stroke="#555" stroke-width="9" stroke-linecap="round"/>
<path d="M958.8 284.3L935.8 259.3" stroke="#555" stroke-width="9" stroke-linecap="round"/>
<path d="M972.3 278.2L968.4 244.4" stroke="#555" stroke-width="9" stroke-linecap="round"/>
<path d="M986.8 281.1L1003.5 251.5" stroke="#555" stroke-width="9" stroke-linecap="round"/>
<path d="M996.8 292.0L1027.8 277.9" stroke="#555" stroke-width="9" stroke-linecap="round"/>
<circle cx="975" cy="302" r="20" fill="#cfcfcf" stroke="#bbb" stroke-width="2"/>
</g>

<!-- latex formula -->
<g font-family="Liberation Serif" fill="#222" font-size="20px">
<text x="403.600" y="573.900" textLength="123" lengthAdjust="spacingAndGlyphs">sin(arctan(<tspan font-style="italic">m</tspan>))</text>
<text x="534" y="574.500" textLength="14.500" lengthAdjust="spacingAndGlyphs">=</text>
<text x="586.300" y="560.400" font-style="italic" textLength="15.400" lengthAdjust="spacingAndGlyphs">m</text>
<text x="573" y="588.750" textLength="9" lengthAdjust="spacingAndGlyphs">1</text>
<text x="588.500" y="588.750" textLength="11.500" lengthAdjust="spacingAndGlyphs">+</text>
<text x="605.800" y="588.750" font-style="italic" textLength="17" lengthAdjust="spacingAndGlyphs">m</text>
<text x="624.800" y="582.500" font-size="13.500">2</text>
</g>
<path d="M556.500 568.300H631.500" stroke="#222" stroke-width=".9"/>
<path d="M558.300 581.300l2.300-1.200 4.200 10.400 4.700-18H631.500" stroke="#222" stroke-width=".9" fill="none"/>

<path d="M218.3 135.3L235.8 135.3M219.2 135.3L220.3 156.7M220.3 145.3L231.7 144.2M220.3 156.7L235.0 156.7M237.5 145.0L250.0 159.2M250.0 145.0L239.2 159.2M252.5 153.0C255.0 152.6 256.4 152.8 260.0 151.7C263.6 150.6 263.3 151.3 263.3 149.7C263.3 148.0 262.8 147.1 260.0 146.7C257.2 146.2 257.5 146.1 255.0 148.3C252.5 150.6 252.5 150.0 252.5 153.3C252.5 156.7 252.8 156.4 255.0 158.3C257.2 160.3 255.8 159.7 259.2 159.2C262.5 158.6 263.1 157.5 265.0 156.7M267.5 147.5L268.3 160.0M268.3 152.5C269.0 151.4 268.8 150.8 270.3 149.2C271.9 147.5 271.2 147.8 273.0 147.5C274.8 147.2 274.9 148.1 275.8 148.3M288.3 148.3C286.7 147.8 286.2 146.1 283.3 146.7C280.4 147.2 281.1 147.5 279.7 150.0C278.3 152.5 278.2 151.2 279.2 154.2C280.1 157.1 280.0 157.3 282.5 158.8C285.0 160.4 284.2 159.6 286.7 158.8C289.2 158.1 288.9 157.4 290.0 156.7M296.2 147.5L296.2 159.2M296.2 140.0L296.2 141.7M310.0 148.0C308.8 147.4 308.7 146.3 306.3 146.3C304.0 146.3 304.0 146.3 303.0 148.0C302.0 149.7 301.8 149.7 303.3 151.3C304.8 153.0 305.1 151.7 307.5 153.0C309.9 154.3 309.9 153.4 310.5 155.3C311.1 157.2 311.0 157.3 309.2 158.7C307.3 160.1 307.5 159.7 305.0 159.5C302.5 159.3 302.8 158.5 301.7 158.0M315.0 153.3C317.2 152.9 318.2 153.2 321.7 152.0C325.1 150.8 325.2 151.6 325.3 149.7C325.4 147.8 324.6 147.1 322.0 146.3C319.4 145.6 319.8 145.7 317.5 147.5C315.2 149.3 315.6 148.6 315.0 151.7C314.4 154.7 314.4 154.2 315.8 156.7C317.2 159.2 316.7 158.6 319.2 159.2C321.7 159.7 321.0 159.3 323.3 158.3C325.7 157.4 325.2 157.0 326.2 156.3M356.7 136.3C355.6 135.6 355.7 134.3 353.3 134.2C351.0 134.0 351.6 133.3 349.7 135.8C347.7 138.3 348.5 135.8 347.5 141.7C346.5 147.5 346.8 145.8 346.7 153.3C346.6 160.8 347.0 160.6 347.2 164.2M343.3 150.3L355.3 149.7M357.5 148.3L358.3 159.2M358.3 153.0C359.2 151.7 359.2 150.9 360.8 149.2C362.5 147.4 361.7 147.8 363.3 147.7C365.0 147.5 365.0 148.3 365.8 148.7M370.0 147.5C368.8 148.3 367.7 147.5 366.3 150.0C364.9 152.5 365.2 152.1 365.8 155.0C366.5 157.9 366.1 157.7 368.3 158.8C370.6 159.9 370.4 159.9 372.5 158.3C374.6 156.8 374.3 157.1 374.7 154.2C375.1 151.3 375.2 151.9 373.7 149.7C372.1 147.4 371.2 148.2 370.0 147.5M378.3 148.3L380.0 160.8M380.0 153.7C381.0 152.2 381.1 150.9 383.0 149.2C384.9 147.4 384.3 147.8 385.8 148.3C387.3 148.9 386.7 147.2 387.5 150.8C388.3 154.4 388.1 156.4 388.3 159.2M388.3 153.0C389.4 151.7 389.6 150.7 391.7 149.2C393.8 147.6 393.0 147.8 394.7 148.3C396.3 148.9 395.7 146.9 396.7 150.8C397.6 154.7 397.2 156.9 397.5 160.0" stroke="#3333cc" stroke-width="1.45" fill="none" stroke-linecap="round" stroke-linejoin="round"/>
<path d="M217.5 163.8L330.0 163.8" stroke="#3333cc" stroke-width="1.8" fill="none" stroke-linecap="round" stroke-linejoin="round"/>
<path d="M387.9 204.3L386.8 221.9M386.4 205.6C388.0 204.7 388.1 203.2 391.2 202.9C394.3 202.7 394.3 202.4 395.6 204.9C396.9 207.4 396.8 207.3 395.2 210.4C393.5 213.6 393.5 212.8 390.8 214.4C388.0 216.0 388.1 215.0 386.8 215.3M380.8 218.8L365.2 234.7M367.0 225.9L365.2 234.7L376.9 231.4" stroke="#3333cc" stroke-width="1.3" fill="none" stroke-linecap="round" stroke-linejoin="round"/>
<path d="M346.0 249.9L384.6 249.9" stroke="#6565dc" stroke-width="1.9" fill="none" stroke-linecap="round" stroke-linejoin="round"/>
<path d="M241.6 277.7L250.9 291.1L255.7 278.4" stroke="#3333cc" stroke-width="1.5" fill="none" stroke-linecap="round" stroke-linejoin="round"/>
<path d="M261.4 282.1L336.4 270.9M326.2 268.0L336.4 270.9L328.4 276.2" stroke="#3333cc" stroke-width="1.2" fill="none" stroke-linecap="round" stroke-linejoin="round"/>
<path d="M679.5 206.4C679.8 207.8 680.0 207.8 680.5 210.5C681.0 213.2 680.9 213.1 681.0 214.4M681.0 214.4C681.7 212.5 681.7 211.4 683.0 208.6C684.3 205.8 683.8 205.8 684.9 206.0C686.0 206.2 685.6 206.9 686.2 209.2C686.9 211.6 686.6 211.8 686.9 213.1M686.9 213.1C687.4 211.4 687.5 210.5 688.5 207.9C689.6 205.3 689.2 204.9 690.1 205.3C691.0 205.8 690.6 206.3 691.1 209.2C691.7 212.2 691.5 212.5 691.7 214.1M683.0 218.9L669.4 231.9M673.0 220.9L669.4 231.9L681.0 229.3" stroke="#3333cc" stroke-width="1.2" fill="none" stroke-linecap="round" stroke-linejoin="round"/>
<path d="M755.4 251.3L784.3 251.3" stroke="#ff00ff" stroke-width="1.5" fill="none" stroke-linecap="round" stroke-linejoin="round"/>
<path d="M526.2 273.6L708.2 273.6" stroke="#00c0ff" stroke-width="2.0" fill="none" stroke-linecap="round" stroke-linejoin="round"/>
<path d="M576.8 340.2L577.2 402.4M572.2 394.6L577.2 402.4L583.6 391.3M552.9 353.1L570.0 351.6M566.5 349.8L570.5 351.6L567.6 355.5M566.5 359.5C565.0 359.0 564.9 357.6 562.2 358.1C559.4 358.6 559.4 358.3 558.2 360.9C557.0 363.6 557.0 364.1 558.6 365.9C560.2 367.8 560.3 367.6 562.9 366.4C565.5 365.2 565.3 364.8 566.5 362.4C567.7 360.0 566.2 357.8 566.5 359.2C566.7 360.7 566.8 361.8 567.2 366.7C567.6 371.5 568.8 370.4 567.6 373.8C566.4 377.3 566.6 376.5 563.6 377.0C560.6 377.4 560.3 375.8 558.6 375.2" stroke="#3333cc" stroke-width="1.5" fill="none" stroke-linecap="round" stroke-linejoin="round"/>
<path d="M607.3 337.8C606.8 340.7 608.5 339.6 605.8 346.6C603.2 353.6 604.9 352.1 599.4 358.8C593.9 365.5 595.3 363.5 589.4 366.7C583.4 369.9 585.8 368.3 581.5 368.4C577.2 368.5 578.2 367.4 576.5 366.9M587.9 345.9C586.5 346.9 585.8 345.7 583.6 348.8C581.5 351.9 581.5 351.3 581.5 355.2C581.5 359.2 581.3 359.0 583.6 360.7C586.0 362.3 585.9 362.3 588.7 360.2C591.4 358.2 591.0 358.6 591.9 354.5C592.9 350.4 592.9 350.9 591.5 348.1C590.2 345.2 589.1 346.6 587.9 345.9M582.5 354.5L591.5 353.1" stroke="#ff00ff" stroke-width="1.6" fill="none" stroke-linecap="round" stroke-linejoin="round"/>
<path d="M623.0 339.5L638.0 335.9M634.0 334.2L638.3 335.9L635.2 339.5M625.9 343.8L629.4 349.5L638.0 340.9" stroke="#008000" stroke-width="1.5" fill="none" stroke-linecap="round" stroke-linejoin="round"/>
<path d="M399.8 424.4C398.0 424.0 397.8 422.4 394.4 423.2C391.0 424.0 391.0 424.2 389.6 426.9C388.2 429.5 388.4 429.9 390.2 431.1C392.0 432.3 392.0 432.1 395.0 430.5C398.0 428.9 397.6 428.5 399.2 426.2C400.8 424.0 399.4 422.6 399.8 423.8C400.2 425.0 399.6 427.3 400.4 429.9C401.2 432.5 401.6 431.1 402.2 431.7M403.4 423.8L404.0 431.7M404.0 427.2C405.0 426.2 405.0 425.2 407.0 424.1C409.0 423.0 409.0 423.9 410.0 423.8M419.7 425.0C418.3 424.6 418.1 423.2 415.5 423.8C412.9 424.4 412.7 424.6 411.9 426.9C411.0 429.1 411.3 429.1 413.1 430.5C414.9 431.9 414.9 431.3 417.3 431.1C419.7 430.9 419.3 430.3 420.3 429.9M427.5 418.8L427.8 431.1M421.1 425.0L432.9 423.8M437.7 425.0C436.3 424.6 435.9 423.0 433.5 423.8C431.1 424.6 431.1 425.1 430.5 427.5C429.9 429.8 429.9 430.0 431.7 430.8C433.5 431.6 433.5 431.8 435.9 429.9C438.3 427.9 437.7 425.0 438.9 425.0C440.1 425.0 438.5 427.9 439.5 429.9C440.5 431.9 441.1 430.7 441.9 431.1M445.5 423.2L446.1 431.1M446.1 427.2C447.3 426.0 447.3 424.3 449.7 423.6C452.1 422.9 451.9 422.6 453.3 425.0C454.7 427.5 453.7 429.1 453.9 431.1M462.9 413.6C461.5 415.4 460.5 414.8 458.7 419.0C456.9 423.2 456.5 421.6 457.5 426.2C458.5 430.9 460.3 430.7 461.7 432.9M468.3 417.2C467.3 418.6 466.5 418.4 465.3 421.4C464.1 424.4 464.1 423.6 464.7 426.2C465.3 428.9 465.1 429.1 467.1 429.3C469.1 429.5 469.1 429.5 470.7 426.9C472.3 424.2 471.9 424.5 471.9 421.4C471.9 418.4 471.9 419.0 470.7 417.6C469.5 416.2 469.1 417.4 468.3 417.2M472.3 428.1L472.5 429.3M475.0 422.0L480.4 416.6L482.2 429.9M492.4 414.8L485.8 416.0M485.8 416.0C485.4 418.0 483.6 420.0 484.6 422.0C485.6 424.0 486.6 420.8 488.8 422.0C491.0 423.2 491.2 423.0 491.2 425.6C491.2 428.3 491.2 428.5 488.8 429.9C486.4 431.3 485.6 429.9 484.0 429.9M489.4 413.0C491.0 415.0 492.4 414.6 494.2 419.0C496.0 423.4 496.0 421.8 494.8 426.2C493.6 430.7 492.0 430.3 490.6 432.3M508.0 402.2C509.8 405.0 510.5 404.2 513.4 410.6C516.3 417.0 516.0 413.2 516.8 421.4C517.6 429.7 516.1 430.7 515.8 435.3" stroke="#ff00ff" stroke-width="1.6" fill="none" stroke-linecap="round" stroke-linejoin="round"/>
<path d="M849.1 336.3C847.7 338.1 847.1 337.0 844.9 341.5C842.7 346.1 843.0 344.7 842.5 349.9C842.0 355.1 841.8 354.1 843.3 357.2C844.8 360.2 843.7 359.6 847.0 359.0C850.3 358.5 849.8 358.5 853.2 355.6C856.7 352.7 856.5 354.7 857.4 350.4C858.3 346.1 857.7 346.8 855.8 342.6C853.9 338.4 853.9 340.0 851.7 337.9C849.4 335.8 849.9 336.9 849.1 336.3M843.3 350.4C845.4 350.2 845.4 349.5 849.6 349.9C853.8 350.2 853.8 350.9 855.8 351.4M906.9 340.0C905.1 339.5 904.6 337.5 901.7 338.4C898.7 339.3 898.5 339.5 898.0 342.6C897.5 345.7 897.5 346.2 900.1 347.8C902.7 349.4 903.2 349.7 905.8 347.3C908.4 344.8 906.9 340.0 907.9 340.5C909.0 341.0 908.4 344.0 909.0 348.8C909.5 353.7 910.5 352.1 909.5 355.1C908.4 358.0 908.4 357.3 905.8 357.7C903.2 358.0 903.8 357.7 901.7 356.1C899.6 354.6 900.3 354.0 899.6 353.0M918.3 338.9C916.9 340.2 916.2 338.6 914.2 342.6C912.1 346.6 911.9 346.4 912.1 350.9C912.3 355.4 912.3 355.1 914.7 356.1C917.1 357.2 917.1 357.2 919.4 354.0C921.6 350.9 920.9 351.4 921.5 346.8C922.0 342.1 922.0 342.6 920.9 340.0C919.9 337.4 919.2 339.3 918.3 338.9M928.8 337.4C927.9 338.2 926.8 337.9 926.1 340.0C925.5 342.1 925.5 342.4 926.7 343.6C927.9 344.8 928.2 344.8 929.8 343.6C931.4 342.4 931.0 342.2 931.4 340.0C931.7 337.7 931.0 337.9 930.8 336.9M941.2 344.5L941.5 354.0" stroke="#ff00ff" stroke-width="1.5" fill="none" stroke-linecap="round" stroke-linejoin="round"/>
<path d="M870.9 345.9L881.4 345.7M870.9 349.4L885.0 349.4M936.0 348.8L947.5 348.8" stroke="#ff00ff" stroke-width="1.0" fill="none" stroke-linecap="round" stroke-linejoin="round"/>
<path d="M964.2 349.6C962.2 349.4 962.0 348.0 958.2 349.0C954.4 350.0 954.8 349.8 952.8 352.6C950.8 355.4 950.8 355.4 952.2 357.4C953.6 359.5 953.4 359.9 957.0 358.6C960.6 357.4 960.4 356.8 963.0 353.8C965.6 350.8 964.2 348.8 964.8 349.6C965.4 350.4 964.0 353.2 964.8 356.2C965.6 359.2 966.4 357.8 967.2 358.6M969.0 350.8L970.2 358.6M970.2 354.2C971.2 352.8 971.0 351.4 973.2 349.9C975.4 348.4 975.6 349.7 976.9 349.6M990.1 349.0C988.3 349.6 988.1 348.8 984.7 350.8C981.3 352.8 981.1 352.2 979.9 355.0C978.7 357.8 978.7 357.6 981.1 359.2C983.5 360.9 982.7 360.3 987.1 359.9C991.5 359.5 991.9 358.6 994.3 358.0M997.9 337.6C997.3 340.8 996.9 340.4 996.1 347.2C995.3 354.0 995.7 354.4 995.5 358.0M991.3 348.2L1000.9 347.2M1007.5 350.2C1005.9 350.2 1005.3 349.0 1002.7 350.2C1000.1 351.4 1000.5 351.2 999.7 353.8C998.9 356.4 998.7 356.8 1000.3 358.0C1001.9 359.2 1001.9 359.5 1004.5 357.4C1007.1 355.4 1006.9 352.0 1008.1 352.0C1009.3 352.0 1007.3 355.2 1008.1 357.4C1008.9 359.7 1009.7 358.2 1010.5 358.6M1012.3 350.2L1013.5 358.6M1013.5 354.2C1014.7 352.9 1014.7 351.2 1017.1 350.2C1019.5 349.3 1018.8 348.6 1020.7 351.4C1022.6 354.2 1022.2 356.2 1022.9 358.6M1039.4 341.2C1037.5 343.2 1036.9 342.4 1033.9 347.2C1031.0 352.0 1031.2 351.3 1030.6 355.6C1030.0 360.0 1030.8 358.7 1032.1 360.2C1033.5 361.7 1033.7 360.2 1034.5 360.2M1046.0 341.8C1044.4 343.2 1043.8 342.2 1041.2 346.0C1038.5 349.8 1038.5 349.3 1038.1 353.2C1037.7 357.2 1037.7 357.0 1040.0 357.8C1042.2 358.6 1042.2 358.6 1044.8 355.6C1047.4 352.7 1047.0 353.2 1047.8 349.0C1048.6 344.8 1047.8 345.4 1047.2 343.0C1046.6 340.6 1046.4 342.2 1046.0 341.8M1046.9 358.6L1047.2 359.5M1055.0 352.0L1063.4 343.0L1060.4 358.0M1080.8 343.0L1070.0 342.4M1070.0 342.4C1068.6 345.0 1065.4 347.8 1065.8 350.2C1066.2 352.6 1068.2 348.6 1071.2 349.6C1074.2 350.6 1074.2 350.4 1074.8 353.2C1075.4 356.0 1075.4 356.0 1073.0 358.0C1070.6 360.1 1070.6 359.5 1067.6 359.2C1064.6 359.0 1065.2 358.0 1064.0 357.4M1079.0 337.6C1080.2 339.6 1081.3 338.8 1082.6 343.6C1083.9 348.4 1084.0 346.8 1083.0 352.0C1082.0 357.2 1081.7 356.2 1079.6 359.2C1077.5 362.3 1077.6 360.5 1076.6 361.1" stroke="#ff00ff" stroke-width="1.5" fill="none" stroke-linecap="round" stroke-linejoin="round"/>
<path d="M300.2 486.7C298.2 487.7 297.7 486.0 294.1 489.7C290.4 493.4 290.7 493.1 289.3 497.9C287.9 502.6 287.9 501.5 290.0 504.0C292.0 506.5 291.3 506.5 295.4 505.4C299.5 504.2 298.8 504.9 302.2 500.6C305.6 496.3 305.4 496.9 305.6 492.4C305.9 488.0 304.7 489.2 302.9 487.3C301.1 485.3 301.1 486.9 300.2 486.7M306.6 504.7L307.1 505.5M309.7 489.7L322.0 489.0L317.9 506.1M313.8 498.6L322.7 497.9M342.4 487.0L329.5 489.0M329.5 489.0C328.8 492.4 325.6 496.1 327.4 499.2C329.3 502.4 331.2 497.7 334.9 498.6C338.7 499.5 338.1 499.2 338.8 502.0C339.4 504.7 339.6 504.8 337.0 506.7C334.3 508.6 334.0 508.1 330.9 507.7C327.7 507.2 328.6 506.1 327.4 505.4M349.2 490.4L349.2 507.7M349.2 491.1C351.3 490.2 351.3 488.3 355.4 488.3C359.5 488.3 359.9 488.3 361.5 491.1C363.1 493.8 362.6 493.6 360.1 496.5C357.6 499.5 357.5 498.6 354.0 499.9C350.5 501.3 351.1 500.4 349.6 500.6" stroke="#3333cc" stroke-width="1.7" fill="none" stroke-linecap="round" stroke-linejoin="round"/>
<path d="M408.5 497.9L422.8 497.9M409.2 503.6L424.2 503.6" stroke="#3333cc" stroke-width="1.1" fill="none" stroke-linecap="round" stroke-linejoin="round"/>
<path d="M281.1 525.5L372.0 525.5" stroke="#00c0ff" stroke-width="1.7" fill="none" stroke-linecap="round" stroke-linejoin="round"/>
<path d="M452.3 484.9L452.3 513.5M461.5 498.6L462.5 507.4M462.5 504.0C463.8 502.4 463.8 500.6 466.6 499.2C469.3 497.9 469.1 497.2 470.6 499.9C472.2 502.6 471.1 504.9 471.3 507.4M471.3 503.6C472.7 502.2 472.8 500.2 475.4 499.2C478.1 498.2 477.8 497.8 479.2 500.6C480.7 503.4 479.6 505.3 479.8 507.7M494.5 499.2C492.7 499.0 492.0 497.4 489.0 498.6C486.1 499.7 486.1 499.9 485.6 502.6C485.2 505.4 485.2 505.8 487.7 506.7C490.2 507.6 490.6 507.6 493.1 505.4C495.6 503.1 494.2 498.8 495.2 499.9C496.2 501.1 496.1 503.6 496.1 508.8C496.1 514.0 497.1 512.6 495.2 515.6C493.3 518.5 493.1 517.9 490.4 517.6C487.7 517.4 488.1 515.8 487.0 514.9M503.8 502.6L504.3 503.3M510.8 498.6L514.9 508.5L521.7 499.2M541.9 481.3L542.2 512.2" stroke="#3333cc" stroke-width="1.7" fill="none" stroke-linecap="round" stroke-linejoin="round"/>
<path d="M483.3 493.1L499.9 489.7M491.1 488.6L499.9 489.7L495.2 494.5M509.2 492.7L527.9 491.1M519.7 488.6L527.9 491.1L521.7 495.4M574.6 499.0L589.8 499.0M575.1 504.7L590.9 504.4" stroke="#3333cc" stroke-width="1.1" fill="none" stroke-linecap="round" stroke-linejoin="round"/>
<path d="M620.6 489.0L620.6 514.5M625.7 497.9L626.6 508.1M626.6 503.6C627.9 501.8 627.9 499.6 630.4 498.2C633.0 496.7 632.7 496.1 634.2 499.2C635.8 502.4 634.9 504.9 635.2 507.7M635.2 503.1C636.6 501.4 636.6 499.4 639.3 498.2C642.0 496.9 641.7 495.9 643.4 499.2C645.1 502.6 644.0 505.1 644.3 508.1M657.7 498.6C655.9 498.3 655.2 496.5 652.2 497.9C649.3 499.2 649.3 499.6 648.8 502.6C648.4 505.7 648.4 506.2 650.9 507.1C653.4 508.1 654.0 508.0 656.3 505.4C658.7 502.7 657.1 498.1 657.9 499.2C658.8 500.4 658.9 502.9 658.8 508.8C658.7 514.7 659.6 513.3 657.7 517.0C655.7 520.6 655.6 519.9 652.9 519.7C650.2 519.5 650.6 517.4 649.5 516.3M667.2 498.6L672.0 507.4L679.5 497.9M694.5 499.2C692.6 499.0 692.4 497.2 689.0 498.6C685.6 499.9 685.1 500.3 684.2 503.3C683.3 506.4 683.3 506.4 686.3 507.7C689.2 509.0 690.8 507.3 693.1 507.1M698.5 499.2C697.3 500.4 695.9 499.9 694.7 502.6C693.6 505.4 693.4 505.7 695.1 507.4C696.9 509.1 697.4 509.1 699.9 507.7C702.4 506.3 702.2 506.1 702.6 503.3C703.1 500.6 702.6 500.9 701.3 499.5C699.9 498.2 699.5 499.3 698.5 499.2M711.5 499.2C709.9 499.2 708.8 498.0 706.7 499.0C704.7 500.0 704.0 500.3 705.4 502.2C706.7 504.1 709.2 502.5 710.8 504.7C712.4 506.9 712.2 507.5 710.1 508.8C708.1 510.1 706.5 508.6 704.7 508.5M723.1 491.1C721.2 493.8 720.1 494.0 717.6 499.2C715.1 504.5 715.3 503.0 715.6 506.7C715.8 510.5 717.4 509.2 718.3 510.4M731.9 489.4C730.3 490.4 729.7 488.7 727.2 492.4C724.6 496.2 724.6 496.1 724.2 500.6C723.7 505.1 723.7 504.7 725.8 506.1C727.9 507.4 727.8 507.4 730.6 504.7C733.3 502.0 732.8 502.4 734.0 497.9C735.1 493.3 734.6 493.9 734.0 491.1C733.3 488.3 732.6 490.0 731.9 489.4M725.1 499.9L733.7 497.9M737.4 490.4C738.4 492.4 739.6 491.5 740.5 496.5C741.4 501.5 741.4 500.5 740.1 505.4C738.8 510.3 737.8 509.3 736.7 511.2M747.9 489.0L748.3 514.5" stroke="#3333cc" stroke-width="1.7" fill="none" stroke-linecap="round" stroke-linejoin="round"/>
<path d="M852.2 499.2L853.8 509.5M853.8 505.8C855.1 503.6 855.0 501.0 857.6 499.2C860.3 497.5 859.9 497.4 861.7 500.6C863.5 503.8 862.6 506.1 863.1 508.8M863.1 504.4C864.5 502.6 864.5 500.3 867.2 499.0C869.8 497.6 869.3 496.8 871.0 500.3C872.7 503.8 871.9 506.4 872.4 509.5M887.6 499.2C886.0 499.0 885.8 497.4 882.8 498.6C879.9 499.7 879.7 499.8 878.8 502.6C877.9 505.5 877.9 506.0 880.1 507.1C882.4 508.3 882.8 508.5 885.6 506.1C888.3 503.6 887.2 499.0 888.3 499.9C889.4 500.8 889.0 503.8 889.0 508.8C889.0 513.8 890.1 512.0 888.3 514.9C886.5 517.9 886.5 517.6 883.5 517.6C880.6 517.6 880.8 515.8 879.4 514.9M894.4 499.2L899.2 510.1L906.0 499.2M923.7 498.6C921.9 498.6 920.8 497.4 918.3 498.6C915.8 499.7 914.9 499.9 916.2 502.0C917.6 504.0 920.1 502.6 922.4 504.7C924.6 506.7 925.3 506.7 923.0 508.1C920.8 509.5 918.0 508.6 915.5 508.8M931.2 498.6L930.9 508.5M931.2 492.2L931.2 493.5M936.7 498.6L937.7 508.8M937.7 505.0C939.2 502.8 939.1 500.2 942.1 498.6C945.1 496.9 944.8 496.5 946.9 499.9C948.9 503.3 947.8 505.8 948.2 508.8" stroke="#3333cc" stroke-width="1.7" fill="none" stroke-linecap="round" stroke-linejoin="round"/>
<path d="M790.6 496.5L805.2 496.2M791.2 502.2L807.0 502.0" stroke="#3333cc" stroke-width="1.1" fill="none" stroke-linecap="round" stroke-linejoin="round"/>
<path d="M973.6 489.0C971.6 491.1 970.2 490.6 967.5 495.2C964.8 499.7 965.0 498.1 965.4 502.6C965.9 507.2 966.2 505.8 968.8 508.8C971.5 511.7 971.8 510.6 973.3 511.5M988.6 498.6C986.5 498.1 986.1 496.3 982.5 497.2C978.8 498.1 978.8 498.3 977.7 501.3C976.6 504.2 976.8 504.7 979.1 506.1C981.3 507.4 981.4 507.6 984.5 505.4C987.6 503.1 986.7 499.0 988.3 499.2C989.9 499.5 988.0 503.1 989.3 506.1C990.5 509.0 991.1 507.4 992.0 508.1M992.7 498.6L994.3 508.1M994.3 503.1C995.4 501.4 995.0 499.9 997.4 498.2C999.9 496.4 1000.2 498.0 1001.5 497.9M1011.7 498.6C1009.9 498.6 1009.5 497.0 1006.3 498.6C1003.1 500.2 1002.9 500.2 1002.2 503.3C1001.5 506.5 1001.5 506.4 1004.3 508.1C1007.0 509.8 1007.0 508.8 1010.4 508.5C1013.8 508.2 1013.1 507.6 1014.5 507.1M1019.6 489.0L1017.9 508.1M1013.1 498.6L1024.0 497.2M1034.2 499.0C1032.4 498.7 1032.0 496.9 1028.8 498.2C1025.6 499.4 1025.6 499.7 1024.7 502.6C1023.8 505.6 1023.8 506.0 1026.1 507.1C1028.3 508.3 1028.5 508.5 1031.5 506.1C1034.5 503.6 1033.4 499.7 1034.9 499.9C1036.4 500.2 1034.9 503.9 1036.0 506.7C1037.1 509.6 1037.5 507.9 1038.3 508.5M1038.7 499.9L1040.4 508.8M1040.4 504.4C1041.5 502.9 1041.6 501.0 1043.8 499.9C1045.9 498.9 1045.7 498.1 1046.9 501.3C1048.1 504.5 1047.3 506.7 1047.4 509.5M1064.9 491.1C1063.1 492.9 1062.5 492.0 1059.4 496.5C1056.3 501.1 1056.4 499.9 1055.6 504.7C1054.8 509.5 1055.8 508.2 1057.0 510.8C1058.2 513.5 1058.4 512.0 1059.2 512.6M1068.3 494.5C1066.7 496.1 1066.0 495.4 1063.5 499.2C1061.0 503.1 1061.2 502.4 1060.8 506.1C1060.4 509.7 1060.4 509.3 1062.4 510.1C1064.5 511.0 1064.2 511.5 1066.9 508.5C1069.6 505.6 1069.2 505.5 1070.6 501.3C1072.0 497.1 1071.8 498.1 1071.0 495.8C1070.2 493.6 1069.2 494.9 1068.3 494.5M1072.8 508.1L1073.3 509.1M1074.4 504.7L1081.9 497.2L1079.2 509.9M1096.5 496.5L1086.7 497.2M1086.7 497.2C1085.8 499.5 1083.0 501.9 1083.9 504.0C1084.9 506.1 1086.7 502.7 1089.4 503.6C1092.1 504.5 1092.1 504.3 1092.1 506.7C1092.1 509.1 1092.1 509.5 1089.4 510.8C1086.7 512.2 1085.8 510.8 1083.9 510.8M1097.3 492.4C1098.4 494.5 1099.6 494.2 1100.6 498.6C1101.6 502.9 1101.4 501.9 1100.3 505.4C1099.2 508.9 1098.3 507.8 1097.3 509.1M1103.0 486.7C1104.6 489.1 1105.7 488.7 1107.8 493.8C1109.8 498.9 1109.4 496.5 1109.1 502.0C1108.9 507.4 1108.7 506.3 1107.1 510.1C1105.5 514.0 1105.3 512.4 1104.4 513.5" stroke="#3333cc" stroke-width="1.7" fill="none" stroke-linecap="round" stroke-linejoin="round"/>
<path d="M978.0 516.0L1106.8 516.0" stroke="#ff00ff" stroke-width="1.6" fill="none" stroke-linecap="round" stroke-linejoin="round"/>
<path d="M855.2 548.6L857.0 559.5M857.0 555.1C858.2 553.1 858.1 550.7 860.6 549.0C863.1 547.2 862.6 546.7 864.5 549.9C866.3 553.1 865.5 555.6 866.1 558.5M866.1 554.0C867.4 552.2 867.3 549.9 869.9 548.6C872.5 547.2 872.3 546.3 874.0 549.9C875.7 553.6 874.7 556.3 875.1 559.5M889.7 549.0C888.0 548.7 887.5 547.1 884.6 548.2C881.8 549.2 881.8 549.4 881.1 552.2C880.3 555.1 880.3 555.7 882.4 556.7C884.6 557.8 885.1 557.8 887.6 555.4C890.2 553.0 888.9 548.6 890.1 549.5C891.2 550.4 891.0 553.0 891.0 558.1C891.0 563.2 891.9 561.9 890.1 564.9C888.3 568.0 888.3 567.2 885.6 567.2C882.8 567.2 883.1 565.7 881.9 564.9M897.2 549.0L901.9 560.1L908.7 549.2" stroke="#3333cc" stroke-width="1.7" fill="none" stroke-linecap="round" stroke-linejoin="round"/>
<path d="M792.3 549.5L807.0 549.5M792.5 555.0L808.3 555.0" stroke="#3333cc" stroke-width="1.1" fill="none" stroke-linecap="round" stroke-linejoin="round"/>
<path d="M923.7 550.9L924.1 551.3" stroke="#3333cc" stroke-width="0.9" fill="none" stroke-linecap="round" stroke-linejoin="round"/>
<path d="M969.0 529.9C967.3 531.1 966.6 530.1 964.1 533.6C961.6 537.0 961.6 536.4 961.4 540.3C961.2 544.1 961.0 543.7 963.5 545.1C966.0 546.6 965.8 547.0 969.0 544.5C972.1 542.1 971.8 542.1 972.9 537.8C973.9 533.6 973.3 534.4 972.0 531.7C970.7 529.1 970.0 530.5 969.0 529.9M977.7 544.5L976.9 547.0M986.0 541.5L995.7 533.6L993.3 546.3M1015.8 532.3L1003.0 532.3M1003.0 532.3C1002.0 535.0 999.4 537.6 1000.0 540.3C1000.6 542.9 1002.6 539.0 1004.9 540.3C1007.2 541.5 1007.1 541.5 1006.9 543.9C1006.7 546.3 1007.0 546.1 1004.3 547.6C1001.5 549.0 1000.6 548.0 998.8 548.2M955.0 573.1L959.2 572.9L965.1 581.4L966.8 560.0M966.8 560.0C974.8 559.6 974.7 559.3 990.9 558.8C1007.0 558.3 998.0 558.5 1015.2 558.5C1032.5 558.5 1033.5 558.7 1042.6 558.8M970.8 575.6L978.7 568.9L978.9 581.0M989.4 567.7L989.4 575.6M1001.8 567.3C1000.4 568.8 999.4 568.3 997.6 571.9C995.7 575.5 995.9 574.8 996.4 578.0C996.8 581.2 996.6 581.0 998.8 581.4C1001.0 581.8 1001.0 582.0 1003.0 579.2C1005.1 576.5 1004.5 576.8 1004.9 573.1C1005.3 569.5 1005.3 570.2 1004.3 568.3C1003.2 566.3 1002.6 567.6 1001.8 567.3M1006.1 579.8L1006.5 580.4M1009.7 574.3L1015.2 569.5L1014.0 580.2M1026.2 570.1L1020.7 570.5M1020.7 570.5C1020.3 572.2 1018.3 573.9 1019.5 575.6C1020.7 577.3 1022.1 574.7 1024.4 575.6C1026.6 576.5 1026.4 576.4 1026.2 578.2C1026.0 580.1 1026.0 580.3 1023.7 581.0C1021.5 581.8 1020.9 580.6 1019.5 580.4" stroke="#3333cc" stroke-width="1.7" fill="none" stroke-linecap="round" stroke-linejoin="round"/>
<path d="M985.4 571.3L993.3 571.3M1029.8 568.9C1031.0 568.1 1031.2 566.7 1033.5 566.4C1035.7 566.2 1037.3 566.4 1036.5 568.0C1035.7 569.6 1032.9 570.2 1031.0 571.3M1031.0 571.3L1037.7 570.5M1028.4 584.1L1028.6 585.1" stroke="#3333cc" stroke-width="1.1" fill="none" stroke-linecap="round" stroke-linejoin="round"/>
<path d="M941.0 553.7L1052.4 553.4" stroke="#3333cc" stroke-width="2.0" fill="none" stroke-linecap="round" stroke-linejoin="round"/>
<path d="M574.3 342L663.800 328.300" stroke="#8aa62b" stroke-width="1.800" fill="none"/><path d="M674.500 326.900L662.400 324.900 664.100 331.600z" fill="#8aa62b"/>
<path d="M728.0 411.5L807.0 411.5" stroke="#ff00ff" stroke-width="1.5" fill="none" stroke-linecap="round" stroke-linejoin="round"/>

</g></svg>
<!--PAGE_END-->
    </div>
    <div class="abs" style="left:1051.950px;top:0;width:1.450px;height:491px;background:#a81e1e"></div>
    <div style="display:none">
    </div>
  </div>
  <div id="status">
    <div class="abs" style="left:0;top:0;width:1214px;height:1px;background:#e4e1de"></div>
    <div class="abs" style="left:7.300px;top:13.300px;font-size:9.500px;color:#2e3436;letter-spacing:0">Page</div>
    <div class="abs" style="left:34.600px;top:3.100px;width:77.200px;height:30.600px;border:1px solid #dcd7d3;border-radius:4.500px;background:#fff;overflow:hidden">
      <div class="abs" style="left:29.400px;top:0;width:47px;height:30px;background:#fefefe;border-left:1px solid #eeecea"></div>
      <div class="abs" style="left:52.600px;top:0;width:1px;height:30px;background:#eeecea"></div>
      <div class="abs" style="left:5.200px;top:8.800px;font-size:10px;color:#2e3436;font-weight:bold;transform:scaleX(.9);transform-origin:0 0">1</div>
      <div class="abs" style="left:38px;top:13.600px;width:6.200px;height:1.200px;background:#d8d8d8"></div>
      <div class="abs" style="left:61px;top:13.600px;width:6.200px;height:1.200px;background:#d8d8d8"></div>
      <div class="abs" style="left:63.500px;top:11.100px;width:1.200px;height:6.200px;background:#d8d8d8"></div>
    </div>
    <div class="abs" style="left:119.600px;top:13.300px;font-size:9.600px;color:#2e3436">of 1</div>
    <div class="abs" style="left:144.500px;top:3.600px;width:1px;height:30px;background:#e1deda"></div>
    <div class="abs" style="left:153.700px;top:13.300px;font-size:9.700px;color:#2e3436;letter-spacing:.1px">Layer</div>
    <div class="abs" style="left:184.500px;top:13.300px;font-size:9.800px;font-weight:bold;color:#2e3436;letter-spacing:0">Solution</div>
    <svg class="dd" style="left:236px;top:17.700px;width:7px;height:5px" viewBox="0 0 8 5"><path d="M.8.800L4 3.900 7.200.8" stroke="#2e3436" stroke-width="1.300" fill="none"/></svg>
    <!-- right icons -->
    <svg class="abs" style="left:972px;top:11.600px;width:17px;height:12px" viewBox="0 0 17 12"><rect x=".8" y=".8" width="6.800" height="10.400" fill="#ebebeb" stroke="#b9bbbc" stroke-width=".9"/><rect x="9.200" y=".8" width="6.800" height="10.400" fill="#ebebeb" stroke="#b9bbbc" stroke-width=".9"/></svg>
    <svg class="abs" style="left:1000.500px;top:10.500px;width:16px;height:16px" viewBox="0 0 16 16"><rect x=".6" y=".4" width="14.800" height="1.600" fill="#6b6f70"/><rect x="1.500" y="2.600" width="13" height="9.600" fill="#f4f4f4" stroke="#9a9d9e" stroke-width=".9"/><path d="M8 12.600v2.600" stroke="#6b6f70" stroke-width="1.200"/></svg>
    <!-- 1 -->
    <svg class="abs" style="left:1029.200px;top:11.200px;width:14px;height:14px" viewBox="0 0 14 14"><rect x="0" y="0" width="14" height="14" rx="2.400" fill="#2e3436"/><path d="M5 4.600L7.600 3v8.200M5.200 11.200h4.600" stroke="#fff" stroke-width="1.700" fill="none"/></svg>
    <!-- fit -->
    <svg class="abs" style="left:1057.200px;top:11.200px;width:14px;height:14px" viewBox="0 0 14 14"><rect x="0" y="0" width="14" height="14" rx="2.400" fill="#2e3436"/><path d="M2.600 5.400V2.600h2.800M8.600 2.600h2.800v2.800M11.400 8.600v2.800H8.600M5.400 11.400H2.600V8.600" stroke="#fff" stroke-width="1.500" fill="none"/><rect x="5.200" y="5.200" width="3.600" height="3.600" fill="#fff"/></svg>
    <!-- minus -->
    <svg class="abs" style="left:1085.200px;top:11.300px;width:14px;height:14px" viewBox="0 0 14 14"><rect x="0" y="0" width="14" height="14" rx="2.400" fill="#2e3436"/><path d="M3 7h8" stroke="#fff" stroke-width="2.200"/></svg>
    <!-- plus -->
    <svg class="abs" style="left:1191px;top:11.300px;width:14px;height:14px" viewBox="0 0 14 14"><rect x="0" y="0" width="14" height="14" rx="2.400" fill="#2e3436"/><path d="M3 7h8M7 3v8" stroke="#fff" stroke-width="2.200"/></svg>
    <!-- zoom slider -->
    <div class="abs" style="left:1140.600px;top:3.200px;width:30px;font-size:10.500px;color:#8e9192;letter-spacing:.55px;white-space:nowrap">181%</div>
    <div class="abs" style="left:1114px;top:23px;width:62px;height:3px;border-radius:2px;background:#dad6d2;border:.5px solid #cdc7c2"></div>
    <div class="abs" style="left:1114px;top:23px;width:38px;height:3px;border-radius:2px;background:#3584e4"></div>
    <div class="abs" style="left:1144.600px;top:30px;width:1px;height:4px;background:#b8b8b8"></div>
    <div class="abs" style="left:1156px;top:30px;width:1px;height:4px;background:#9a9a9a"></div>
    <svg class="abs" style="left:1147px;top:17.500px;width:15px;height:17px" viewBox="0 0 15 17"><path d="M7.500 .8a6.200 6.200 0 0 1 6.200 6.200c0 2.600-2.600 5-6.200 9-3.600-4-6.200-6.400-6.200-9A6.200 6.200 0 0 1 7.500 .8z" fill="#f9f9f8" stroke="#c3bdb8" stroke-width=".9"/></svg>
  <!--STATUS-->
  </div>
</div>
</body>
</html>
